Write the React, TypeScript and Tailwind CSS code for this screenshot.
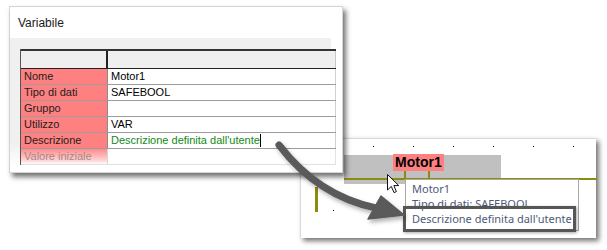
const rows: [string, string][] = [
  ["Nome", "Motor1"],
  ["Tipo di dati", "SAFEBOOL"],
  ["Gruppo", ""],
  ["Utilizzo", "VAR"],
];

function VariableDialog() {
  return (
    <div className="absolute left-[9px] top-[6px] w-[334px] h-[167px] bg-white border border-[#d4d4d4] shadow-[3px_4px_5px_rgba(0,0,0,0.55)] font-['Liberation_Sans',Arial,sans-serif]">
      <div className="h-[31px] pl-[8px] pt-[9px] text-[12px] leading-[15px] text-[#1a1a1a]">Variabile</div>
      <div className="w-[321px] h-[128px] pl-[10px] pt-[11px] bg-[linear-gradient(to_bottom,#f0f0f0_82%,#ffffff)]">
        <div className="w-[316px] border-l border-[#555] text-[11px] leading-[15px]">
          {/* header */}
          <div className="grid grid-cols-[87px_228px] h-[20px] bg-[#efefef] border-t-2 border-b border-t-[#333] border-b-[#222]">
            <div className="border-r-2 border-[#222]" />
            <div className="border-r border-[#c8c8c8]" />
          </div>
          {rows.map(([label, value]) => (
            <div key={label} className="grid grid-cols-[87px_228px] h-[16px] border-b border-[#9c9c9c]">
              <div className="bg-[#ff8080] pl-[3px] text-[#1e1e1e] border-r border-[#8c8c8c]">{label}</div>
              <div className="bg-white pl-[3px] text-black border-r border-[#d0d0d0]">{value}</div>
            </div>
          ))}
          <div className="grid grid-cols-[87px_228px] h-[16px] border-b border-[#9c9c9c]">
            <div className="bg-[#ff8080] pl-[3px] text-[#1e1e1e] border-r border-[#8c8c8c]">Descrizione</div>
            <div className="bg-white pl-[3px] text-[#138a13] border-r border-[#d0d0d0] flex items-center">
              <span>Descrizione definita dall'utente</span>
              <span className="w-[1px] h-[13px] bg-black" />
            </div>
          </div>
          <div className="grid grid-cols-[87px_228px] h-[16px] border-b border-[#e0e0e0]">
            <div className="bg-[linear-gradient(to_bottom,#ff8a8a,#ffd8d8_80%,#ffffff)] pl-[3px] text-[#a88888] border-r border-[#d8d8d8]">
              Valore iniziale
            </div>
            <div className="bg-white border-r border-[#e4e4e4]" />
          </div>
        </div>
      </div>
    </div>
  );
}

function Cursor() {
  return (
    <svg className="absolute left-[387px] top-[174px]" width="13" height="20" viewBox="0 0 13 20">
      <path d="M0.5 0.5 L0.5 16 L4.3 12.4 L7 18.6 L9.4 17.6 L6.8 11.6 L11.8 11.6 Z" fill="white" stroke="#111" strokeWidth="1" strokeLinejoin="round" />
    </svg>
  );
}

function CanvasView() {
  const topDots = [32, 72, 112, 152, 192, 232, 272];
  return (
    <div className="absolute left-[300px] top-[138px] w-[296px] h-[100px] bg-white border-t border-l border-[#dadada] shadow-[3px_3px_5px_rgba(0,0,0,0.55)] font-['Liberation_Sans',Arial,sans-serif]">
      {topDots.map((x) => (
        <div key={x} className="absolute top-[7px] w-[1px] h-[1px] bg-black" style={{ left: x }} />
      ))}
      <div className="absolute left-[32px] top-[71px] w-[1px] h-[1px] bg-black" />
      <div className="absolute left-[72px] top-[71px] w-[1px] h-[1px] bg-black" />
      {/* block */}
      <div className="absolute left-[43px] top-[16px] w-[157px] h-[29px] bg-[#c0c0c0]" />
      <div className="absolute left-[43px] top-[39px] w-[253px] h-[2px] bg-[#8c8c10]" />
      <div className="absolute left-[103px] top-[32px] w-[2px] h-[8px] bg-[#8c8c10]" />
      <div className="absolute left-[127px] top-[32px] w-[2px] h-[8px] bg-[#8c8c10]" />
      <div className="absolute left-[14px] top-[48px] w-[3px] h-[25px] bg-[#8c8c10]" />
      <div className="absolute left-[92px] top-[15px] h-[17px] px-[2px] bg-[#ff8080] text-[14px] leading-[17px] font-bold text-black">
        Motor1
      </div>
      {/* tooltip */}
      <div className="absolute left-[104px] top-[40px] w-[174px] h-[52px] bg-white border border-[#a8a8a8] pl-[6px] pt-[1px] text-[11px] leading-[15px] text-[#4e5a78] whitespace-nowrap font-['Noto_Sans',sans-serif]">
        <div>Motor1</div>
        <div>Tipo di dati: SAFEBOOL</div>
        <div>Descrizione definita dall'utente</div>
      </div>
      <div className="absolute left-[102px] top-[67px] w-[173px] h-[26px] border-[3px] border-[#565656] shadow-[1px_1px_3px_rgba(0,0,0,0.35)]" />
    </div>
  );
}

function BigArrow() {
  return (
    <svg className="absolute left-0 top-0" width="607" height="250" viewBox="0 0 607 250">
      <defs>
        <filter id="sh" x="-20%" y="-20%" width="140%" height="140%">
          <feDropShadow dx="2" dy="3" stdDeviation="2" floodColor="#000" floodOpacity="0.3" />
        </filter>
      </defs>
      <g filter="url(#sh)">
        <path d="M279 145 Q 318 196 376 208" fill="none" stroke="#5a5a5a" strokeWidth="7" strokeLinecap="round" />
        <polygon points="381,196 404,215 368,219" fill="#5a5a5a" stroke="#5a5a5a" strokeWidth="1.5" strokeLinejoin="round" />
      </g>
    </svg>
  );
}

export default function App() {
  return (
    <div className="relative w-[607px] h-[250px] bg-white overflow-hidden">
      <CanvasView />
      <Cursor />
      <VariableDialog />
      <BigArrow />
    </div>
  );
}
